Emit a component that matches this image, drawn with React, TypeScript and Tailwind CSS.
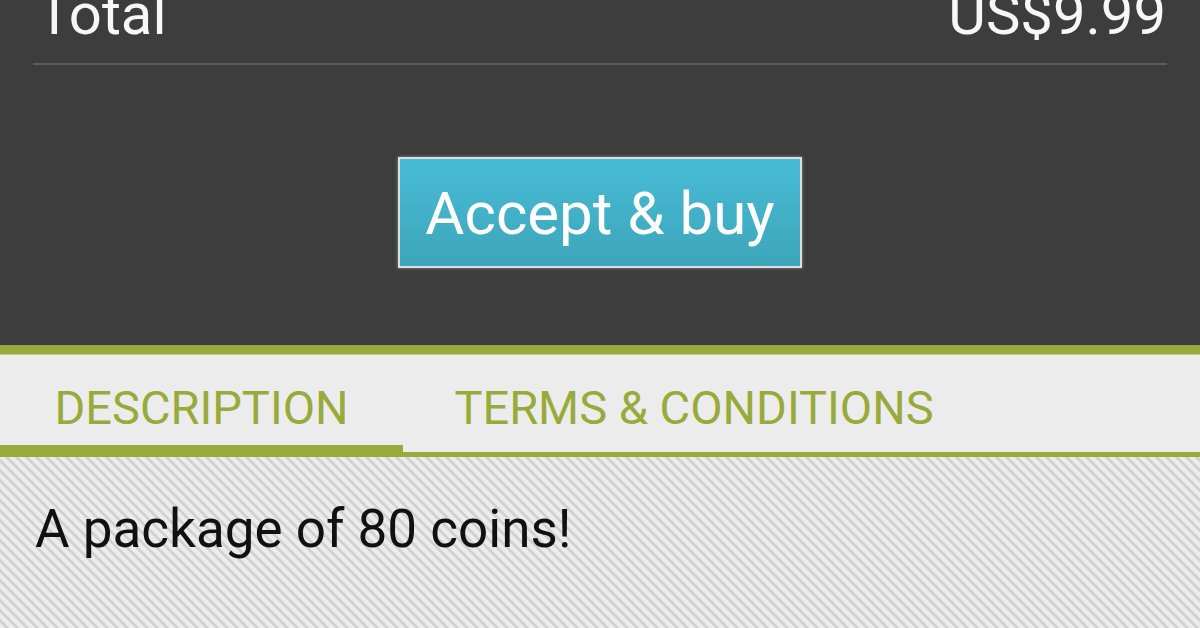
import React from "react";

export default function App() {
  return (
    <div
      className="w-[1200px] h-[628px] overflow-hidden flex flex-col bg-[#3d3d3d]"
      style={{ fontFamily: "Roboto, 'Noto Sans', sans-serif" }}
    >
      {/* Top dark section */}
      <div className="h-[345px] flex flex-col shrink-0">
        <div className="flex justify-between px-[34px] mt-[-15px] text-[58px] leading-[58px] text-[#f7f7f7]">
          <span className="pl-[3px]">Total</span>
          <span>US$9.99</span>
        </div>
        <div className="mx-[33px] mt-[20px] h-[2px] bg-[#5c5c5c]" />
        <div className="flex justify-center mt-[92px]">
          <button className="w-[404px] h-[111px] border-2 border-[#dedede] bg-gradient-to-b from-[#47bcd6] to-[#3da5ba] shadow-[0_0_3px_rgba(255,255,255,0.45)] text-white text-[60px] leading-none flex items-center justify-center pt-[3px]">
            Accept &amp; buy
          </button>
        </div>
      </div>

      {/* Green bar */}
      <div className="h-[9px] bg-[#98aa3a] shrink-0" />
      <div className="h-[1px] bg-[#c3cd8a] shrink-0" />

      {/* Tabs */}
      <div className="h-[102px] bg-[#ececec] flex shrink-0">
        <div className="w-[403px] flex flex-col">
          <div className="flex-1 flex justify-center pt-[30px] text-[47px] leading-[46px] text-[#98aa3a]">
            DESCRIPTION
          </div>
          <div className="h-[12px] bg-[#98aa3a]" />
        </div>
        <div className="w-[582px] flex flex-col">
          <div className="flex-1 flex justify-center pt-[30px] text-[47px] leading-[46px] text-[#98aa3a]">
            TERMS &amp; CONDITIONS
          </div>
          <div className="h-[5px] bg-[#98aa3a]" />
        </div>
        <div className="flex-1 flex flex-col">
          <div className="flex-1" />
          <div className="h-[5px] bg-[#98aa3a]" />
        </div>
      </div>

      {/* Content */}
      <div className="flex-1 bg-[repeating-linear-gradient(45deg,#ececec_0px,#ececec_4.2px,#d2d2d2_4.2px,#d2d2d2_7.07px)]">
        <div className="pl-[35px] pt-[46px] text-[53px] leading-[53px] text-[#111111]">
          A package of 80 coins!
        </div>
      </div>
    </div>
  );
}
